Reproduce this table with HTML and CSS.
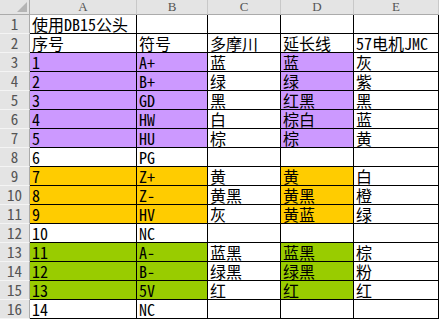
FILE: index.html
```html
<!DOCTYPE html>
<html>
<head>
<meta charset="utf-8">
<link rel="stylesheet" href="styles.css">
</head>
<body>
<div class="sheet">
  <div class="hd corner"><span class="tri"></span></div>
  <div class="hd col">A</div><div class="hd col">B</div><div class="hd col">C</div><div class="hd col">D</div><div class="hd col">E</div>

  <div class="rh">1</div><div class="c">使用DB15公头</div><div class="c"></div><div class="c"></div><div class="c"></div><div class="c"></div>
  <div class="rh">2</div><div class="c">序号</div><div class="c">符号</div><div class="c">多摩川</div><div class="c">延长线</div><div class="c">57电机JMC</div>

  <div class="rh">3</div><div class="c p">1</div><div class="c p">A+</div><div class="c">蓝</div><div class="c p">蓝</div><div class="c">灰</div>
  <div class="rh">4</div><div class="c p">2</div><div class="c p">B+</div><div class="c">绿</div><div class="c p">绿</div><div class="c">紫</div>
  <div class="rh">5</div><div class="c p">3</div><div class="c p">GD</div><div class="c">黑</div><div class="c p">红黑</div><div class="c">黑</div>
  <div class="rh">6</div><div class="c p">4</div><div class="c p">HW</div><div class="c">白</div><div class="c p">棕白</div><div class="c">蓝</div>
  <div class="rh">7</div><div class="c p">5</div><div class="c p">HU</div><div class="c">棕</div><div class="c p">棕</div><div class="c">黄</div>
  <div class="rh">8</div><div class="c">6</div><div class="c">PG</div><div class="c"></div><div class="c"></div><div class="c"></div>

  <div class="rh">9</div><div class="c o">7</div><div class="c o">Z+</div><div class="c">黄</div><div class="c o">黄</div><div class="c">白</div>
  <div class="rh">10</div><div class="c o">8</div><div class="c o">Z-</div><div class="c">黄黑</div><div class="c o">黄黑</div><div class="c">橙</div>
  <div class="rh">11</div><div class="c o">9</div><div class="c o">HV</div><div class="c">灰</div><div class="c o">黄蓝</div><div class="c">绿</div>
  <div class="rh">12</div><div class="c">10</div><div class="c">NC</div><div class="c"></div><div class="c"></div><div class="c"></div>

  <div class="rh">13</div><div class="c g">11</div><div class="c g">A-</div><div class="c">蓝黑</div><div class="c g">蓝黑</div><div class="c">棕</div>
  <div class="rh">14</div><div class="c g">12</div><div class="c g">B-</div><div class="c">绿黑</div><div class="c g">绿黑</div><div class="c">粉</div>
  <div class="rh">15</div><div class="c g">13</div><div class="c g">5V</div><div class="c">红</div><div class="c g">红</div><div class="c">红</div>
  <div class="rh">16</div><div class="c">14</div><div class="c">NC</div><div class="c"></div><div class="c"></div><div class="c"></div>
</div>
</body>
</html>
```

FILE: styles.css
```css
html, body {
  margin: 0;
  padding: 0;
  background: #ffffff;
}
.sheet {
  display: grid;
  grid-template-columns: 30px 107px 71px 73px 73px 85px;
  grid-template-rows: 15px;
  grid-auto-rows: 19px;
  width: 440px;
  font-family: "Noto Sans Mono CJK SC", "Noto Sans CJK SC", monospace;
  font-size: 16px;
  color: #000;
}
.sheet > div {
  box-sizing: border-box;
  white-space: nowrap;
}
.hd {
  background: #e4e4e4;
  border-bottom: 1px solid #ababab;
  border-right: 1px solid #c8c8c8;
  color: #555;
  font-family: "Liberation Serif", serif;
  font-size: 13px;
  line-height: 14px;
  text-align: center;
}
.corner {
  position: relative;
  border-right-color: #ababab;
}
.tri {
  position: absolute;
  right: 2px;
  bottom: 2px;
  width: 0;
  height: 0;
  border-left: 10px solid transparent;
  border-bottom: 10px solid #b4b4b4;
}
.rh {
  background: #e4e4e4;
  border-right: 1px solid #ababab;
  border-bottom: 1px solid #f4f4f4;
  color: #555;
  font-size: 15px;
  line-height: 18px;
  text-align: center;
}
.c {
  border-right: 1px solid #000;
  border-bottom: 1px solid #000;
  padding-left: 2px;
  line-height: 18px;
}
.p { background: #cc99ff; }
.o { background: #ffcc00; }
.g { background: #99cc00; }
```
